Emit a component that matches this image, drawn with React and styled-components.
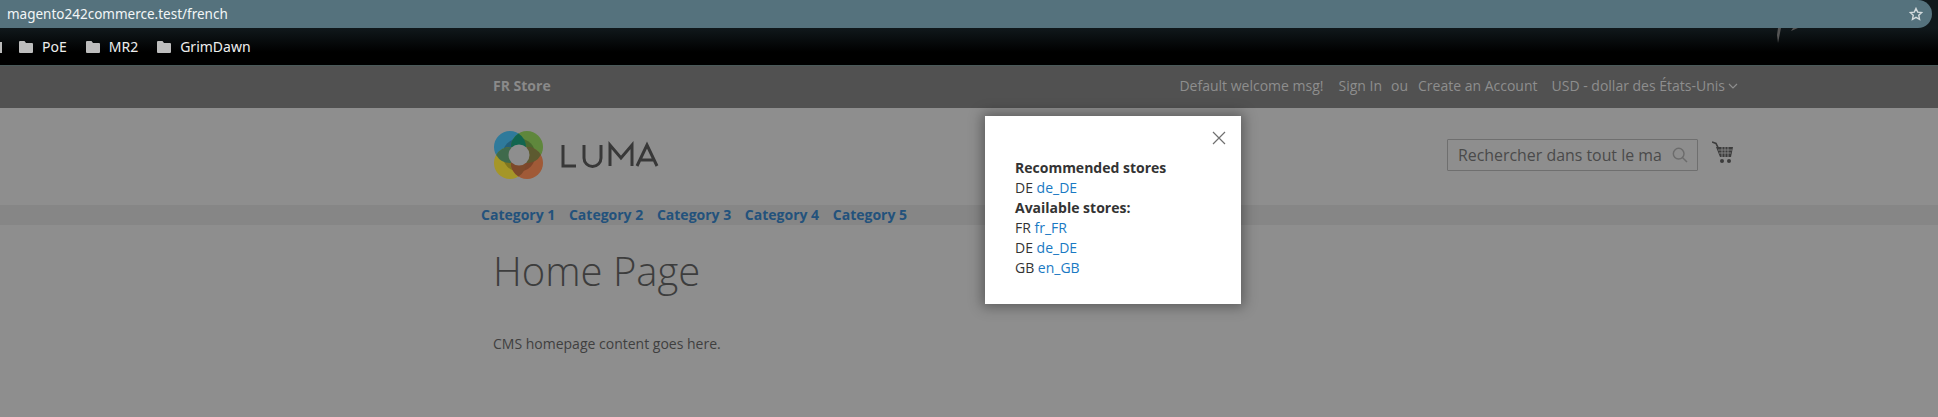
import React from "react";
import styled, { createGlobalStyle } from "styled-components";

const Global = createGlobalStyle`
  html, body { margin: 0; padding: 0; background: #8e8e8e; }
  body { font-family: "Open Sans", "Noto Sans", sans-serif; overflow: hidden; }
`;
const Page = styled.div`position: relative; width: 1938px; height: 417px; overflow: hidden; background: #8e8e8e;`;
const ChromeTop = styled.div`background: #10181b; height: 28px; position: relative;`;
const AddressBar = styled.div`
  height: 28px; width: 1932px; background: #55727d; border-radius: 0 14px 14px 0;
  display: flex; align-items: center; justify-content: space-between;
  padding: 0 9px 0 7px; box-sizing: border-box; color: #f2f6f7;
  font: 13.5px/28px "Noto Sans", sans-serif;
`;
const Bookmarks = styled.div`
  position: relative; height: 37px; background: linear-gradient(#10181b, #000 65%);
  display: flex; align-items: center; padding-left: 19px; gap: 19px; color: #eee;
  font: 14px "Noto Sans", sans-serif;
`;
const EdgeMark = styled.span`position: absolute; left: 0; top: 14px; width: 2px; height: 11px; background: #bbb;`;
const Streak = styled.svg`position: absolute; left: 1774px; top: 0; width: 30px; height: 16px;`;
const Bookmark = styled.span`display: flex; align-items: center; gap: 9px;`;
const Panel = styled.div`
  height: 43px; background: #515151; border-top: 1px solid #4a5a5a; box-sizing: border-box;
  display: flex; align-items: center; justify-content: space-between;
  padding: 0 200px 3px 493px; color: #8e8e8e; font-size: 14px;
`;
const StoreName = styled.strong`font-weight: 700; color: #8a8a8a;`;
const PanelLinks = styled.div`display: flex; align-items: center; color: #8e8e8e;`;
const PanelItem = styled.span`margin-left: ${p => p.$gap}px; display: inline-flex; align-items: center;`;
const Header = styled.div`
  height: 97px; box-sizing: border-box; display: flex; justify-content: space-between;
  padding: 0 205px 0 493px;
`;
const Logo = styled.div`display: flex; padding-top: 22px;`;
const Tools = styled.div`display: flex; padding-top: 31px; align-items: flex-start;`;
const Search = styled.div`
  width: 251px; height: 32px; box-sizing: border-box; border: 1px solid #6f6f6f;
  display: flex; align-items: center; justify-content: space-between; padding: 0 9px 0 10px;
  border-radius: 1px; font-size: 15.9px; color: #4a4a4a; overflow: hidden; white-space: nowrap;
`;
const Cart = styled.svg`margin-left: 14px; margin-top: 2px; width: 21px; height: 24px;`;
const Nav = styled.nav`
  height: 20px; box-sizing: border-box; padding: 0 0 1px 481px; background: #868686; display: flex; gap: 13.7px;
  align-items: center; font-size: 14px; font-weight: 700; color: #23527c;
`;
const Main = styled.main`padding: 24px 0 0 493px;`;
const Title = styled.h1`margin: 0; font-size: 40px; line-height: 44px; font-weight: 300; color: #3d3d3d;`;
const Copy = styled.p`margin: 41px 0 0; font-size: 14px; line-height: 20px; color: #3f3f3f;`;
const Modal = styled.div`
  position: absolute; left: 985px; top: 116px; width: 256px; height: 188px; box-sizing: border-box;
  background: #fff; box-shadow: 0 0 12px 3px rgba(0,0,0,.35); padding: 42px 30px;
  font-size: 14px; line-height: 20px; color: #333;
`;
const Close = styled.svg`position: absolute; right: 15px; top: 15px; width: 14px; height: 14px;`;
const Line = styled.div``;
const Heading = styled.div`font-weight: 700;`;
const StoreLink = styled.span`color: #1979c3;`;

const Folder = () => (
  <svg width="14" height="12" viewBox="0 0 14 12"><path fill="#bdbdbd" d="M1 0h4.5l1.5 2h6a1 1 0 0 1 1 1v8a1 1 0 0 1-1 1H1a1 1 0 0 1-1-1V1a1 1 0 0 1 1-1z"/></svg>
);

export default function App() {
  return (
    <Page>
      <Global />
      <ChromeTop>
        <AddressBar>
          <span>magento242commerce.test/french</span>
          <svg width="14" height="14" viewBox="0 0 24 24" fill="none" stroke="#d5dcde" strokeWidth="2.4"><path d="M12 2.5l2.9 6.3 6.9.8-5.1 4.7 1.4 6.8-6.1-3.4-6.1 3.4 1.4-6.8-5.1-4.7 6.9-.8z"/></svg>
        </AddressBar>
      </ChromeTop>
      <Bookmarks>
        <EdgeMark />
        <Streak viewBox="0 0 30 16"><path d="M4 0l3 0-3 15-1-8zM24 0l-5 0-2 3z" fill="#555"/></Streak>
        <Bookmark><Folder />PoE</Bookmark>
        <Bookmark><Folder />MR2</Bookmark>
        <Bookmark><Folder />GrimDawn</Bookmark>
      </Bookmarks>
      <Panel>
        <StoreName>FR Store</StoreName>
        <PanelLinks>
          <PanelItem $gap={0}>Default welcome msg!</PanelItem>
          <PanelItem $gap={15}>Sign In</PanelItem>
          <PanelItem $gap={9}>ou</PanelItem>
          <PanelItem $gap={10}>Create an Account</PanelItem>
          <PanelItem $gap={14}>USD - dollar des États-Unis
            <svg width="10" height="6" viewBox="0 0 10 6" fill="none" stroke="#8e8e8e" strokeWidth="1.2" style={{marginLeft:3}}><path d="M1 1l4 4 4-4"/></svg>
          </PanelItem>
        </PanelLinks>
      </Panel>
      <Header>
        <Logo>
          <svg width="166" height="52" viewBox="0 0 166 52">
            <circle cx="17" cy="17" r="16" fill="#2f7a9b"/>
            <circle cx="34" cy="17" r="16" fill="#5f873c"/>
            <circle cx="17" cy="33" r="16" fill="#a59628"/>
            <circle cx="34" cy="33" r="16" fill="#a05a37"/>
            <circle cx="26" cy="25" r="16.5" fill="#000" opacity=".22"/>
            <path d="M25.5 3.45A16 16 0 0 1 25.5 30.55A16 16 0 0 1 25.5 3.45z" fill="#12654f"/>
            <path d="M3.14 25A16 16 0 0 1 30.86 25A16 16 0 0 1 3.14 25z" fill="#3f6a4c"/>
            <path d="M20.14 25A16 16 0 0 1 47.86 25A16 16 0 0 1 20.14 25z" fill="#5d5a30"/>
            <path d="M25.5 19.45A16 16 0 0 1 25.5 46.55A16 16 0 0 1 25.5 19.45z" fill="#7d4a2a"/>
            <circle cx="26" cy="25" r="10.5" fill="#8e8e8e"/>
            <path d="M70 15v21h13M91 15v13a8.5 8.5 0 0 0 17 0V15M117 36V15l11 13 11-13v21" fill="none" stroke="#383838" strokeWidth="3"/>
            <path d="M144 36l10-21 10 21M148 30h12" fill="none" stroke="#383838" strokeWidth="3"/>
          </svg>
        </Logo>
        <Tools>
          <Search>
            <span>Rechercher dans tout le ma</span>
            <svg width="16" height="16" viewBox="0 0 24 24" fill="none" stroke="#6c6c6c" strokeWidth="2.2"><circle cx="10" cy="10" r="8"/><path d="M16 16l6.5 6.5"/></svg>
          </Search>
          <Cart viewBox="0 0 21 24">
            <path d="M0 1l4 1.5 3 6" fill="none" stroke="#3c3c3c" strokeWidth="1.6"/>
            <path d="M4 6h17l-2 10H8z" fill="#3c3c3c"/>
            <path d="M6 9h14M7 12h12M10 6v10M13 6v10M16 6v10" stroke="#8e8e8e" strokeWidth=".8"/>
            <circle cx="10" cy="20" r="2" fill="#3c3c3c"/><circle cx="17" cy="20" r="2" fill="#3c3c3c"/>
          </Cart>
        </Tools>
      </Header>
      <Nav>
        <span>Category 1</span><span>Category 2</span><span>Category 3</span><span>Category 4</span><span>Category 5</span>
      </Nav>
      <Main>
        <Title>Home Page</Title>
        <Copy>CMS homepage content goes here.</Copy>
      </Main>
      <Modal>
        <Close viewBox="0 0 14 14" fill="none" stroke="#707070" strokeWidth="1.2"><path d="M1 1l12 12M13 1L1 13"/></Close>
        <Heading>Recommended stores</Heading>
        <Line>DE <StoreLink>de_DE</StoreLink></Line>
        <Heading>Available stores:</Heading>
        <Line>FR <StoreLink>fr_FR</StoreLink></Line>
        <Line>DE <StoreLink>de_DE</StoreLink></Line>
        <Line>GB <StoreLink>en_GB</StoreLink></Line>
      </Modal>
    </Page>
  );
}
